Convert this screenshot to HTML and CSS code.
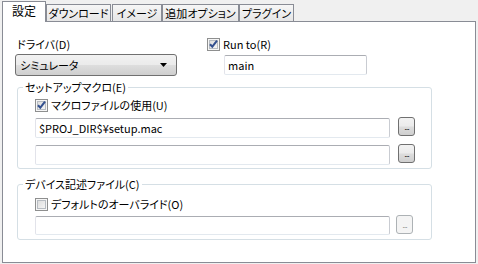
FILE: index.html
```html
<!DOCTYPE html>
<html lang="ja">
<head>
    <meta charset="UTF-8">
    <title>設定</title>
    <link rel="stylesheet" href="styles.css">
</head>
<body>
    <div class="tabs">
        <div class="tab active">設定</div>
        <div class="tab tab-download">ダウンロード</div>
        <div class="tab tab-image">イメージ</div>
        <div class="tab tab-option">追加オプション</div>
        <div class="tab tab-plugin">プラグイン</div>
    </div>

    <div class="panel">
        <div class="top-row">
            <div class="col-left">
                <div class="label">ドライバ(D)</div>
                <div class="select">
                    <span>シミュレータ</span>
                    <svg width="7" height="4" viewBox="0 0 7 4"><path d="M0 0H7L3.5 4Z" fill="#000"/></svg>
                </div>
            </div>
            <div class="col-right">
                <div class="check">
                    <svg class="box" width="13" height="13" viewBox="0 0 13 13">
                        <defs>
                            <linearGradient id="gin" x1="0" y1="0" x2="1" y2="1">
                                <stop offset="0" stop-color="#dcdcdc"/>
                                <stop offset="1" stop-color="#f6f6f6"/>
                            </linearGradient>
                        </defs>
                        <rect x="0.5" y="0.5" width="12" height="12" fill="#f6f6f6" stroke="#8e8f8f"/>
                        <rect x="2.5" y="2.5" width="8" height="8" fill="url(#gin)" stroke="#b7bcc2"/>
                        <path d="M3 6.2L5.3 8.7L10 2.6" fill="none" stroke="#33508f" stroke-width="2"/>
                    </svg>
                    <span>Run to(R)</span>
                </div>
                <div class="textbox run-to">main</div>
            </div>
        </div>

        <fieldset class="group macro">
            <legend>セットアップマクロ(E)</legend>
            <div class="check">
                <svg class="box" width="13" height="13" viewBox="0 0 13 13">
                    <rect x="0.5" y="0.5" width="12" height="12" fill="#f6f6f6" stroke="#8e8f8f"/>
                    <rect x="2.5" y="2.5" width="8" height="8" fill="url(#gin)" stroke="#b7bcc2"/>
                    <path d="M3 6.2L5.3 8.7L10 2.6" fill="none" stroke="#33508f" stroke-width="2"/>
                </svg>
                <span>マクロファイルの使用(U)</span>
            </div>
            <div class="file-row first">
                <div class="textbox path">$PROJ_DIR$¥setup.mac</div>
                <div class="browse">...</div>
            </div>
            <div class="file-row second">
                <div class="textbox path"></div>
                <div class="browse">...</div>
            </div>
        </fieldset>

        <fieldset class="group device">
            <legend>デバイス記述ファイル(C)</legend>
            <div class="check">
                <svg class="box" width="13" height="13" viewBox="0 0 13 13">
                    <rect x="0.5" y="0.5" width="12" height="12" fill="#f6f6f6" stroke="#8e8f8f"/>
                    <rect x="2.5" y="2.5" width="8" height="8" fill="url(#gin)" stroke="#b7bcc2"/>
                </svg>
                <span>デフォルトのオーバライド(O)</span>
            </div>
            <div class="file-row">
                <div class="textbox path"></div>
                <div class="browse disabled">...</div>
            </div>
        </fieldset>
    </div>
</body>
</html>
```

FILE: styles.css
```css
body {
    margin: 0;
    background-color: #f0f0f0;
    font-family: "Noto Sans CJK JP", "Liberation Sans", sans-serif;
    font-size: 11px;
    line-height: 14px;
    font-feature-settings: "palt";
    color: #000;
}
.tabs {
    display: flex;
    align-items: flex-end;
    height: 21px;
    padding-left: 2px;
}
.tab {
    box-sizing: border-box;
    height: 17px;
    padding-top: 1px;
    text-align: center;
    white-space: nowrap;
    border: 1px solid #898c95;
    border-bottom: none;
    background: linear-gradient(#f6f6f6, #e6e6e6);
}
.tab.active {
    position: relative;
    z-index: 1;
    width: 44px;
    height: 21px;
    margin-bottom: -1px;
    padding-top: 2px;
    font-size: 12px;
    background: #fff;
}
.tab-download { width: 65px; }
.tab-image { width: 50px; margin-left: 1px; }
.tab-option { width: 77px; }
.tab-plugin { width: 55px; }

.panel {
    box-sizing: border-box;
    width: 474px;
    height: 242px;
    margin-left: 2px;
    padding: 15px 0 0 12px;
    border: 1px solid #898c95;
    background-color: #fff;
}
.top-row {
    display: flex;
}
.col-left {
    width: 162px;
}
.label {
    height: 14px;
    padding-left: 2px;
}
.select {
    box-sizing: border-box;
    display: flex;
    align-items: center;
    justify-content: space-between;
    height: 22px;
    margin-top: 3px;
    padding: 0 9px 0 4px;
    border: 1px solid #707070;
    border-radius: 3px;
    background: linear-gradient(#f2f2f2 0%, #ebebeb 48%, #dddddd 52%, #cfcfcf 100%);
}
.col-right {
    margin-left: 30px;
}
.check {
    display: flex;
    align-items: center;
    height: 14px;
}
.check .box {
    flex: none;
    margin-right: 3px;
}
.textbox {
    box-sizing: border-box;
    height: 20px;
    padding: 2px 0 0 3px;
    border: 1px solid;
    border-color: #abadb3 #c9ccd2 #e3e9ef #e2e3ea;
    border-radius: 2px;
    background-color: #fff;
    white-space: nowrap;
}
.run-to {
    width: 143px;
    margin: 4px 0 0 17px;
}

.group {
    box-sizing: border-box;
    width: 415px;
    margin: 4px 0 0 2px;
    border: 1px solid #d5dfe5;
    border-radius: 3px;
}
.group legend {
    padding: 0 2px;
    line-height: 14px;
}
.group > .check,
.group > .file-row {
    margin-left: 12px;
}
.macro {
    padding: 4px 0 3px 5px;
}
.device {
    margin-top: 8px;
    padding: 6px 0 4px 5px;
}
.file-row {
    display: flex;
    align-items: flex-start;
    margin-top: 6px;
}
.file-row.second {
    margin-top: 7px;
}
.device .file-row {
    margin-top: 5px;
}
.device .textbox {
    height: 19px;
}
.path {
    width: 355px;
}
.browse {
    box-sizing: border-box;
    width: 17px;
    height: 19px;
    margin: -1px 0 0 8px;
    border: 1px solid #707070;
    border-radius: 3px;
    background: linear-gradient(#f2f2f2 0%, #ebebeb 48%, #dddddd 52%, #cfcfcf 100%);
    font-family: "Liberation Sans", sans-serif;
    font-size: 9px;
    line-height: 18px;
    text-align: center;
    letter-spacing: -1px;
}
.browse.disabled {
    margin-left: 6px;
    border-color: #adb2b5;
    background: #f4f4f4;
    color: #8d8d8d;
}
```
